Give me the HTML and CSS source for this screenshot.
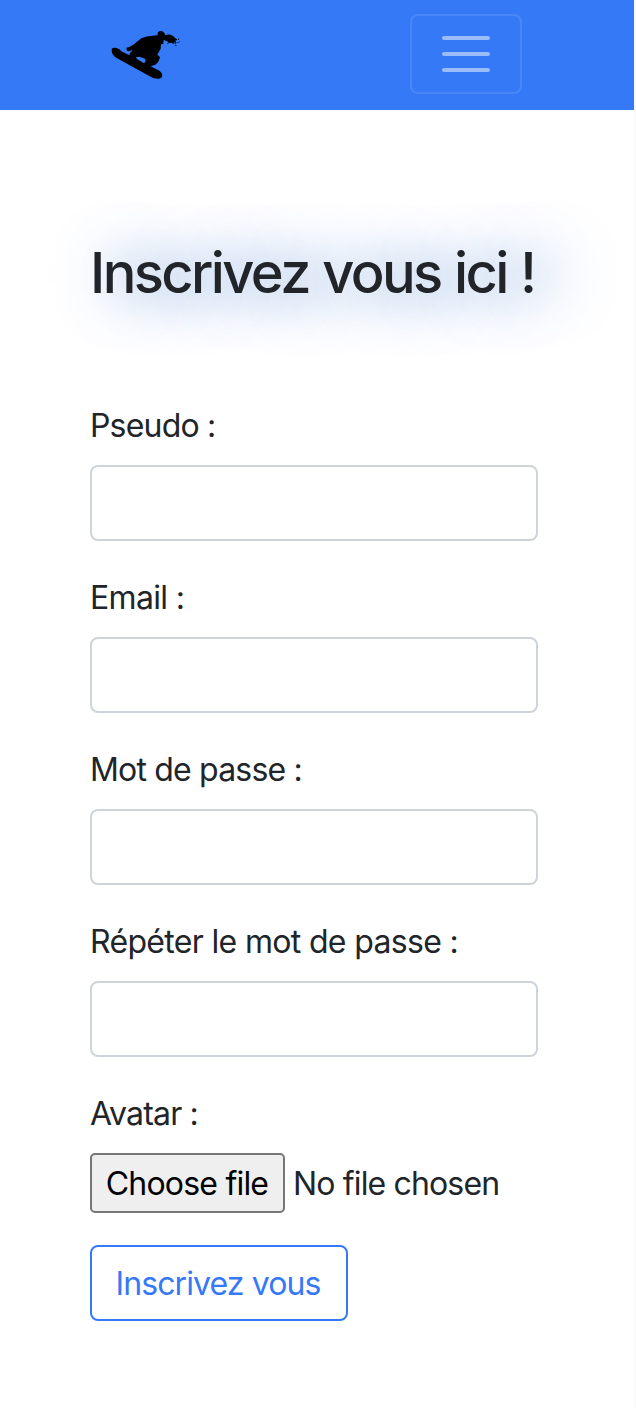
FILE: index.html
```html
<!DOCTYPE html>
<html lang="fr">
<head>
  <meta charset="utf-8">
  <title>Inscription</title>
  <link rel="stylesheet" href="styles.css">
</head>
<body>
  <div class="page">
    <header class="navbar">
      <a class="brand" href="#" aria-label="Accueil">
        <svg class="logo" viewBox="0 0 270 210" aria-hidden="true">
          <path d="M35 86 Q40 81 50 84 Q59 87 64 94 L88 106 Q88 98 95 94 L98 89 Q88 96 81 92 L79 83 L88 81 L100 74 L124 55 Q140 48 157 47 L173 46 Q171 36 179 33 Q188 31 194 40 L195 46 Q203 42 211 44 L218 47 L225 53 L231 61 L226 61 L230 70 L223 67 L220 72 L214 68 L206 69 L202 64 L196 62 L191 59 L190 72 L183 73 L182 86 L172 104 L180 111 Q177 127 166 134 L152 139 L169 148 Q185 154 187 165 Q186 178 172 176 Q158 176 148 168 L88 135 L49 113 Q34 106 35 86Z M107 112 L112 118 L132 130 L137 124 L135 116 L119 110Z" fill-rule="evenodd"/>
          <path d="M234 56h3v3h-3z M227 57h4v3h-4z M232 66h3v3h-3z M224 69h3v4h-3z M237 64h2v3h-2z M226 75h3v3h-3z M202 69h3v3h-3z"/>
        </svg>
      </a>
      <button class="toggler" type="button" aria-label="Menu">
        <svg class="bars" viewBox="0 0 60 60" aria-hidden="true">
          <path d="M8 14h44M8 30h44M8 46h44"/>
        </svg>
      </button>
    </header>
    <main class="content">
      <h1 class="title">Inscrivez vous ici !</h1>
      <form class="form">
        <div class="field"><label class="label label-short" for="pseudo">Pseudo :</label><input class="control" id="pseudo" type="text"></div>
        <div class="field"><label class="label" for="email">Email :</label><input class="control" id="email" type="email"></div>
        <div class="field"><label class="label label-short" for="password">Mot de passe :</label><input class="control" id="password" type="password"></div>
        <div class="field"><label class="label" for="repeat">Répéter le mot de passe :</label><input class="control" id="repeat" type="password"></div>
        <div class="field">
          <span class="label label-short">Avatar :</span>
          <div class="file-picker">
            <button class="file-button" type="button">Choose file</button>
            <span class="file-name">No file chosen</span>
          </div>
        </div>
        <button class="submit" type="button">Inscrivez vous</button>
      </form>
    </main>
  </div>
</body>
</html>
```
FILE: styles.css
```css
* {
  box-sizing: border-box;
}

body {
  margin: 0;
  background: #f9f9fe;
  color: #212529;
  font: 400 32px/48px Inter, "Liberation Sans", sans-serif;
}

button {
  font: inherit;
}

.page {
  width: 634px;
  min-height: 1408px;
  background: #fff;
  overflow: hidden;
}

.navbar {
  display: flex;
  justify-content: space-between;
  align-items: center;
  height: 110px;
  padding: 0 112px 2px 100px;
  background: #3579f6;
}

.brand {
  display: flex;
  padding-top: 2px;
}

.logo {
  width: 90px;
  height: 70px;
}

.toggler {
  display: flex;
  align-items: center;
  justify-content: center;
  width: 112px;
  height: 80px;
  padding: 0;
  border: 2px solid #4986f7;
  border-radius: 8px;
  background: transparent;
}

.bars {
  width: 60px;
  height: 60px;
  fill: none;
  stroke: #9abcfb;
  stroke-width: 4;
  stroke-linecap: round;
}

.content {
  padding: 129px 96px 0 90px;
}

.title {
  margin: 0 0 94px;
  font-size: 56px;
  font-weight: 500;
  line-height: 68px;
  letter-spacing: -2.6px;
  word-spacing: 1px;
  white-space: nowrap;
  text-shadow: 22px 2px 58px #447fc2;
}

.field {
  display: flex;
  flex-direction: column;
  align-items: flex-start;
  gap: 16px;
  margin-bottom: 32px;
}

.label {
  height: 48px;
  padding-top: 1px;
  letter-spacing: -0.67px;
  white-space: nowrap;
}

.label-short {
  letter-spacing: -0.82px;
}

.control {
  width: 448px;
  height: 76px;
  padding: 12px 24px;
  border: 2px solid #ced4da;
  border-radius: 8px;
  background: #fff;
  font: inherit;
}

.file-picker {
  display: flex;
  align-items: center;
  gap: 8px;
  height: 60px;
}

.file-button {
  width: 195px;
  height: 60px;
  padding: 2px 1px 0 0;
  border: 2px solid #767676;
  border-radius: 5px;
  background: #efefef;
  color: #000;
  letter-spacing: -0.8px;
  white-space: nowrap;
}

.file-name {
  padding-top: 2px;
  letter-spacing: -0.85px;
  white-space: nowrap;
}

.submit {
  width: 258px;
  height: 76px;
  padding: 2px 2px 0 0;
  border: 2px solid #3579f6;
  border-radius: 8px;
  background: #fff;
  color: #3579f6;
  letter-spacing: -0.9px;
}
```
